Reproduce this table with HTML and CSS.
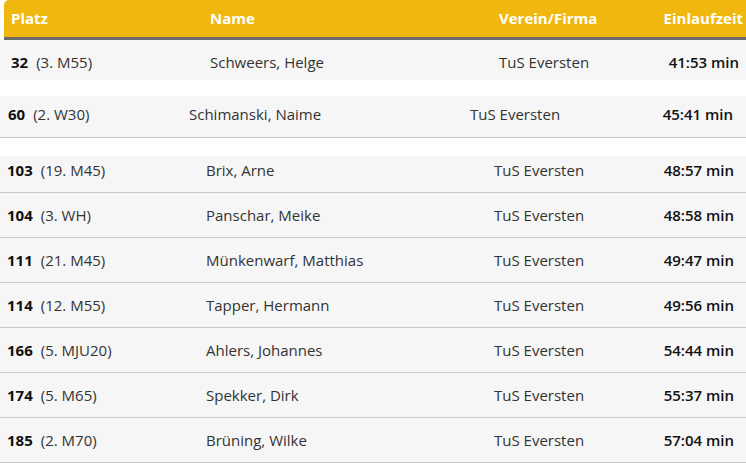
FILE: index.html
```html
<!DOCTYPE html>
<html lang="de">
<head>
<meta charset="utf-8">
<title>Ergebnisse</title>
<link rel="stylesheet" href="styles.css">
</head>
<body>
<section class="tbl t1">
  <div class="head">
    <div class="c-platz">Platz</div>
    <div>Name</div>
    <div>Verein/Firma</div>
    <div class="c-time">Einlaufzeit</div>
  </div>
  <div class="row r-first">
    <div class="c-platz"><b>32</b><span>(3. M55)</span></div>
    <div>Schweers, Helge</div>
    <div>TuS Eversten</div>
    <div class="c-time"><strong>41:53 min</strong></div>
  </div>
</section>

<section class="tbl t2">
  <div class="row r-second">
    <div class="c-platz"><b>60</b><span>(2. W30)</span></div>
    <div>Schimanski, Naime</div>
    <div>TuS Eversten</div>
    <div class="c-time"><strong>45:41 min</strong></div>
  </div>
</section>

<section class="tbl t3">
  <div class="row r-top">
    <div class="c-platz"><b>103</b><span>(19. M45)</span></div>
    <div>Brix, Arne</div>
    <div>TuS Eversten</div>
    <div class="c-time"><strong>48:57 min</strong></div>
  </div>
  <div class="row">
    <div class="c-platz"><b>104</b><span>(3. WH)</span></div>
    <div>Panschar, Meike</div>
    <div>TuS Eversten</div>
    <div class="c-time"><strong>48:58 min</strong></div>
  </div>
  <div class="row">
    <div class="c-platz"><b>111</b><span>(21. M45)</span></div>
    <div>Münkenwarf, Matthias</div>
    <div>TuS Eversten</div>
    <div class="c-time"><strong>49:47 min</strong></div>
  </div>
  <div class="row">
    <div class="c-platz"><b>114</b><span>(12. M55)</span></div>
    <div>Tapper, Hermann</div>
    <div>TuS Eversten</div>
    <div class="c-time"><strong>49:56 min</strong></div>
  </div>
  <div class="row">
    <div class="c-platz"><b>166</b><span>(5. MJU20)</span></div>
    <div>Ahlers, Johannes</div>
    <div>TuS Eversten</div>
    <div class="c-time"><strong>54:44 min</strong></div>
  </div>
  <div class="row">
    <div class="c-platz"><b>174</b><span>(5. M65)</span></div>
    <div>Spekker, Dirk</div>
    <div>TuS Eversten</div>
    <div class="c-time"><strong>55:37 min</strong></div>
  </div>
  <div class="row">
    <div class="c-platz"><b>185</b><span>(2. M70)</span></div>
    <div>Brüning, Wilke</div>
    <div>TuS Eversten</div>
    <div class="c-time"><strong>57:04 min</strong></div>
  </div>
</section>
</body>
</html>
```

FILE: styles.css
```css
* { box-sizing: border-box; }

html, body {
  margin: 0;
  padding: 0;
  background: #ffffff;
}

body {
  width: 746px;
  font-family: "Open Sans", "Noto Sans", sans-serif;
  font-size: 15px;
  line-height: 20px;
  color: #333333;
}

.head,
.row {
  display: grid;
  align-items: center;
  white-space: nowrap;
}

.c-time { text-align: right; }

.c-platz {
  display: flex;
  gap: 8px;
}

b {
  font-weight: 700;
  color: #111111;
}

strong {
  font-weight: 600;
  color: #111111;
}

/* table 1 */
.t1 .head,
.t1 .row {
  grid-template-columns: 199px 289px 1fr auto;
}

.head {
  margin-left: 4px;
  height: 40px;
  padding: 0 3px 3px 7px;
  background: #f0b80f;
  border-bottom: 3px solid #6b6b6b;
  border-top-left-radius: 5px;
  color: #ffffff;
  font-weight: 700;
}

.head > div { padding-top: 1px; }

.row {
  background: #f6f6f6;
}

.r-first {
  padding: 12px 7px 8px 11px;
  grid-template-columns: 199px 289px 1fr auto;
}

/* table 2 */
.t2 { margin-top: 16px; }

.t2 .row {
  grid-template-columns: 181px 281px 1fr auto;
  padding: 8px 13px 13px 8px;
  border-bottom: 1px solid #c9c9c9;
}

/* table 3 */
.t3 { margin-top: 18px; }

.t3 .row {
  grid-template-columns: 199px 288px 1fr auto;
  padding: 12px 12px 12px 7px;
  border-bottom: 1px solid #c9c9c9;
}

.t3 .r-top { padding-top: 4px; }
```
